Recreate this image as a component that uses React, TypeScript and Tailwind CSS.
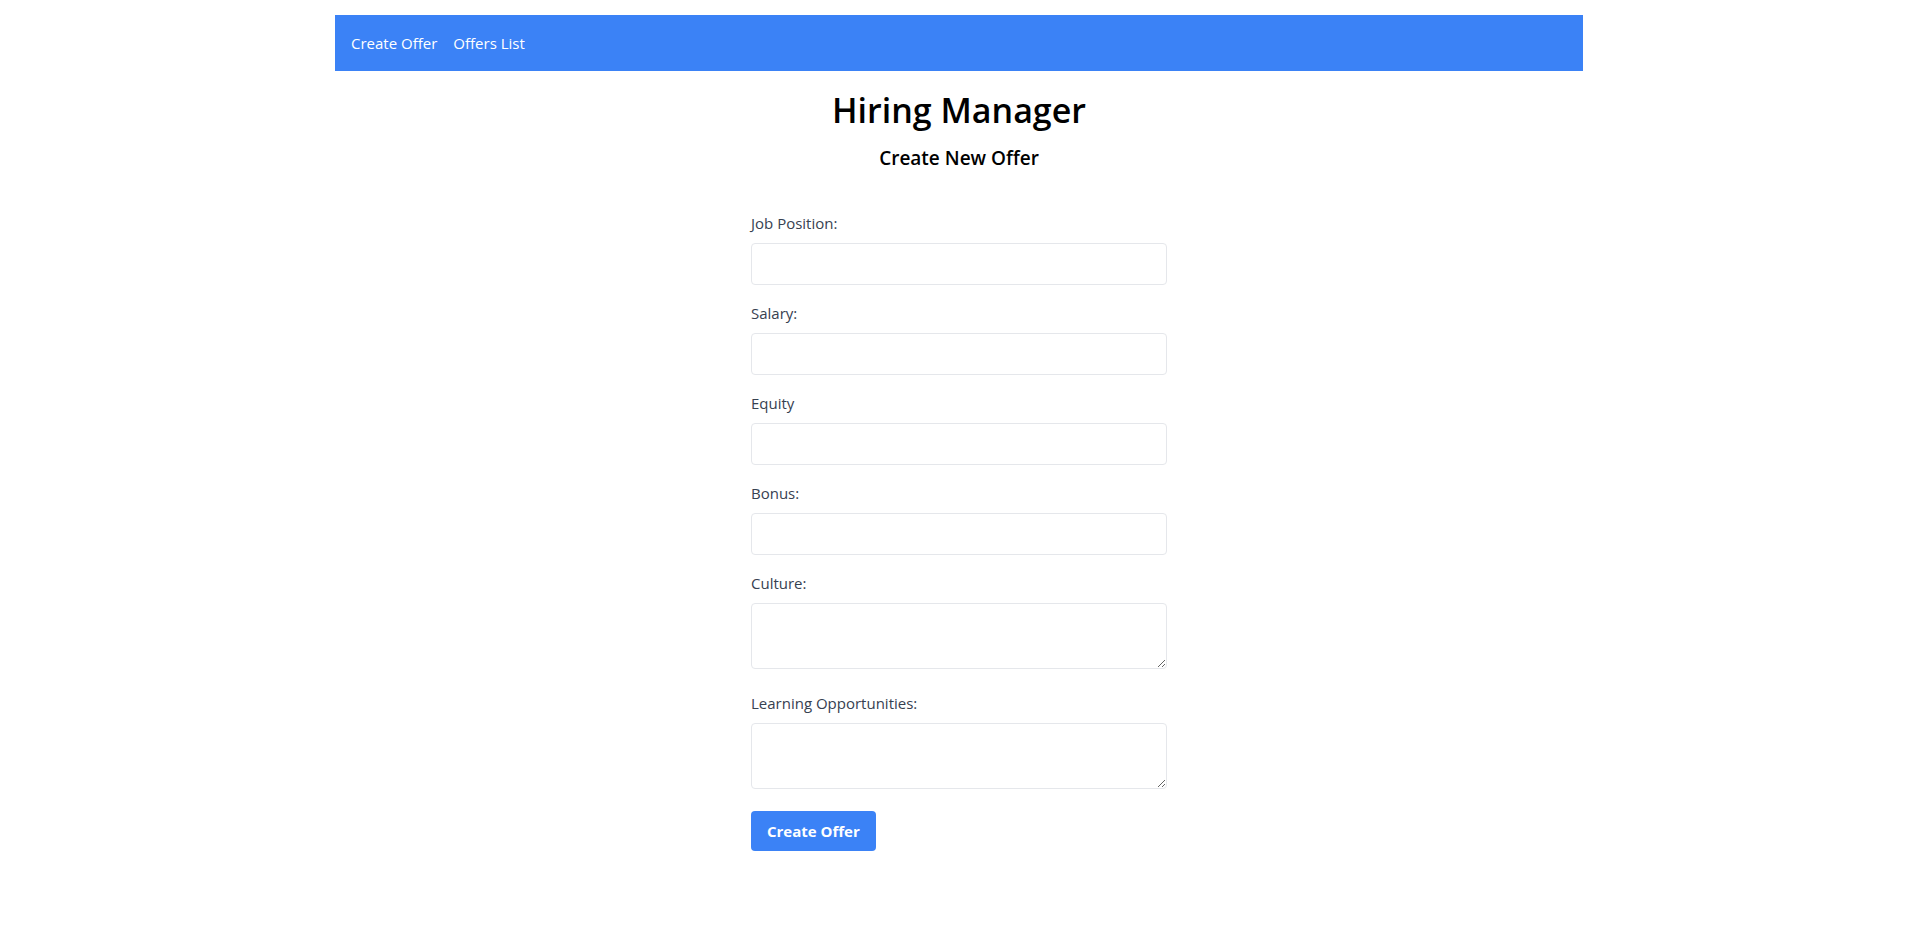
import { useState } from "react";

const fields = [
  { id: "position", label: "Job Position:", type: "input" },
  { id: "salary", label: "Salary:", type: "input" },
  { id: "equity", label: "Equity", type: "input" },
  { id: "bonus", label: "Bonus:", type: "input" },
  { id: "culture", label: "Culture:", type: "textarea" },
  { id: "learning", label: "Learning Opportunities:", type: "textarea" },
];

const App = () => {
  const [values, setValues] = useState<Record<string, string>>({});

  const update = (id: string, v: string) =>
    setValues((prev) => ({ ...prev, [id]: v }));

  return (
    <div className="min-h-screen bg-white font-['Open_Sans',sans-serif] text-black">
      <div className="max-w-7xl mx-auto px-4 pt-[15px]">
        {/* Navegación */}
        <nav className="h-14 bg-[#3b82f6] flex items-center gap-4 px-4 text-white">
          <a href="#" className="text-[15px]">Create Offer</a>
          <a href="#" className="text-[15px]">Offers List</a>
        </nav>

        <h1 className="mt-[19px] text-[34px] leading-10 font-semibold text-center">
          Hiring Manager
        </h1>
        <h2 className="mt-[14px] text-[19px] leading-7 font-semibold text-center">
          Create New Offer
        </h2>

        <form
          className="w-[416px] mx-auto mt-[39px]"
          onSubmit={(e) => e.preventDefault()}
        >
          {fields.map((f) => (
            <div key={f.id} className="mb-4">
              <label htmlFor={f.id} className="block mb-2 text-[15px] leading-6 text-[#374151]">
                {f.label}
              </label>
              {f.type === "input" ? (
                <input
                  id={f.id}
                  type="text"
                  value={values[f.id] ?? ""}
                  onChange={(e) => update(f.id, e.target.value)}
                  className="block w-full h-[42px] px-3 py-2 border border-[#e5e7eb] rounded"
                />
              ) : (
                <textarea
                  id={f.id}
                  rows={2}
                  value={values[f.id] ?? ""}
                  onChange={(e) => update(f.id, e.target.value)}
                  className="w-full px-3 py-2 leading-6 border border-[#e5e7eb] rounded"
                />
              )}
            </div>
          ))}

          <button
            type="submit"
            className="px-4 py-2 leading-6 bg-[#3b82f6] text-white font-bold rounded text-[15px]"
          >
            Create Offer
          </button>
        </form>
      </div>
    </div>
  );
};

export default App;
